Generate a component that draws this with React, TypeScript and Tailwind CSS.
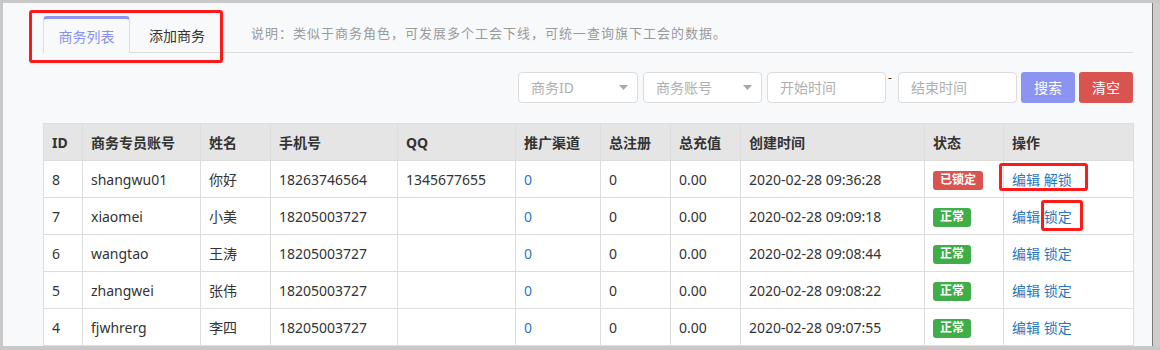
import React from "react";

type Row = {
  id: number;
  account: string;
  name: string;
  phone: string;
  qq: string;
  time: string;
  locked: boolean;
};

const rows: Row[] = [
  { id: 8, account: "shangwu01", name: "你好", phone: "18263746564", qq: "1345677655", time: "2020-02-28 09:36:28", locked: true },
  { id: 7, account: "xiaomei", name: "小美", phone: "18205003727", qq: "", time: "2020-02-28 09:09:18", locked: false },
  { id: 6, account: "wangtao", name: "王涛", phone: "18205003727", qq: "", time: "2020-02-28 09:08:44", locked: false },
  { id: 5, account: "zhangwei", name: "张伟", phone: "18205003727", qq: "", time: "2020-02-28 09:08:22", locked: false },
  { id: 4, account: "fjwhrerg", name: "李四", phone: "18205003727", qq: "", time: "2020-02-28 09:07:55", locked: false },
];

const headers = ["ID", "商务专员账号", "姓名", "手机号", "QQ", "推广渠道", "总注册", "总充值", "创建时间", "状态", "操作"];
const widths = ["w-[39px]", "w-[118px]", "w-[70px]", "w-[127px]", "w-[118px]", "w-[85px]", "w-[70px]", "w-[70px]", "w-[184px]", "w-[79px]", "w-[130px]"];

function Caret() {
  return (
    <svg width="9" height="5" viewBox="0 0 9 5" className="shrink-0">
      <path d="M0 0h9L4.5 5z" fill="#a8a8a8" />
    </svg>
  );
}

function SelectBox({ label, w }: { label: string; w: string }) {
  return (
    <div className={`${w} h-[31px] bg-white border border-[#dcdcdc] rounded-[4px] flex items-center justify-between pl-[12px] pr-[9px] text-[14px] text-[#b0b0b0]`}>
      <span>{label}</span>
      <Caret />
    </div>
  );
}

function InputBox({ label }: { label: string }) {
  return (
    <div className="w-[119px] h-[31px] bg-white border border-[#dcdcdc] rounded-[4px] flex items-center pl-[12px] text-[14px] text-[#b0b0b0]">
      {label}
    </div>
  );
}

export default function App() {
  const cell = "h-[37px] border border-[#dddddd] px-2 align-middle";

  return (
    <div className="relative w-[1160px] h-[350px] overflow-hidden bg-[#c8c8c8] flex pt-[3px] pl-[3px] pb-[4px] font-['Noto_Sans','Noto_Sans_CJK_SC',sans-serif]">
      <div className="flex-1 bg-[#f8f9fb] pl-[40px] pr-[19px] pt-[13px] overflow-hidden">
        {/* tabs */}
        <div className="flex border-b border-[#dddddd]">
          <div className="w-[87px] h-[37px] -mb-px border-x border-[#dddddd] border-t-[3px] border-t-[#8f95ee] rounded-t-[4px] bg-[#f8f9fb] flex items-center justify-center text-[14px] text-[#8b90ef]">
            商务列表
          </div>
          <div className="px-[19px] pt-[3px] flex items-center text-[14px] text-[#333333]">添加商务</div>
          <div className="ml-[27px] flex items-center text-[13px] tracking-[1px] text-[#9a9a9a]">
            说明：类似于商务角色，可发展多个工会下线，可统一查询旗下工会的数据。
          </div>
        </div>

        {/* filters */}
        <div className="mt-[19px] flex justify-end items-start h-[31px]">
          <SelectBox label="商务ID" w="w-[120px]" />
          <div className="ml-[5px]">
            <SelectBox label="商务账号" w="w-[119px]" />
          </div>
          <div className="ml-[5px]">
            <InputBox label="开始时间" />
          </div>
          <span className="w-[12px] pl-[2px] text-[12px] leading-[12px] text-[#333333]">-</span>
          <InputBox label="结束时间" />
          <button className="ml-[4px] w-[54px] h-[31px] rounded-[3px] bg-[#8c94f1] text-white text-[14px]">搜索</button>
          <button className="ml-[4px] w-[54px] h-[31px] rounded-[3px] bg-[#d9534f] text-white text-[14px]">清空</button>
        </div>

        {/* table */}
        <table className="mt-[20px] w-[1090px] table-fixed border-collapse bg-white text-[14px] text-[#333333]">
          <colgroup>
            {widths.map((w, i) => (
              <col key={i} className={w} />
            ))}
          </colgroup>
          <thead>
            <tr className="bg-[#e5e5e5]">
              {headers.map((h) => (
                <th key={h} className={`${cell} text-left font-bold`}>
                  {h}
                </th>
              ))}
            </tr>
          </thead>
          <tbody>
            {rows.map((r) => (
              <tr key={r.id}>
                <td className={cell}>{r.id}</td>
                <td className={cell}>{r.account}</td>
                <td className={cell}>{r.name}</td>
                <td className={cell}>{r.phone}</td>
                <td className={cell}>{r.qq}</td>
                <td className={`${cell} text-[#2a77c0]`}>0</td>
                <td className={cell}>0</td>
                <td className={cell}>0.00</td>
                <td className={cell}>{r.time}</td>
                <td className={cell}>
                  {r.locked ? (
                    <span className="inline-flex items-center h-[19px] px-[7px] rounded-[3px] bg-[#d9534f] text-white text-[12px] font-bold">已锁定</span>
                  ) : (
                    <span className="inline-flex items-center h-[19px] px-[7px] rounded-[3px] bg-[#3fae49] text-white text-[12px] font-bold">正常</span>
                  )}
                </td>
                <td className={`${cell} text-[#2a77c0]`}>
                  <span>编辑</span> <span>{r.locked ? "解锁" : "锁定"}</span>
                </td>
              </tr>
            ))}
          </tbody>
        </table>
      </div>
      <div className="w-[8px] border-l border-[#7a7a7a] bg-[#cdcdcd]" />

      {/* red annotation boxes */}
      <div className="absolute left-[29px] top-[10px] w-[194px] h-[53px] border-[3px] border-[#ff1a1a] rounded-[3px] pointer-events-none" />
      <div className="absolute left-[999px] top-[163px] w-[89px] h-[28px] border-[3px] border-[#ff1a1a] rounded-[3px] pointer-events-none" />
      <div className="absolute left-[1041px] top-[200px] w-[42px] h-[31px] border-[3px] border-[#ff1a1a] rounded-[3px] pointer-events-none" />
    </div>
  );
}
